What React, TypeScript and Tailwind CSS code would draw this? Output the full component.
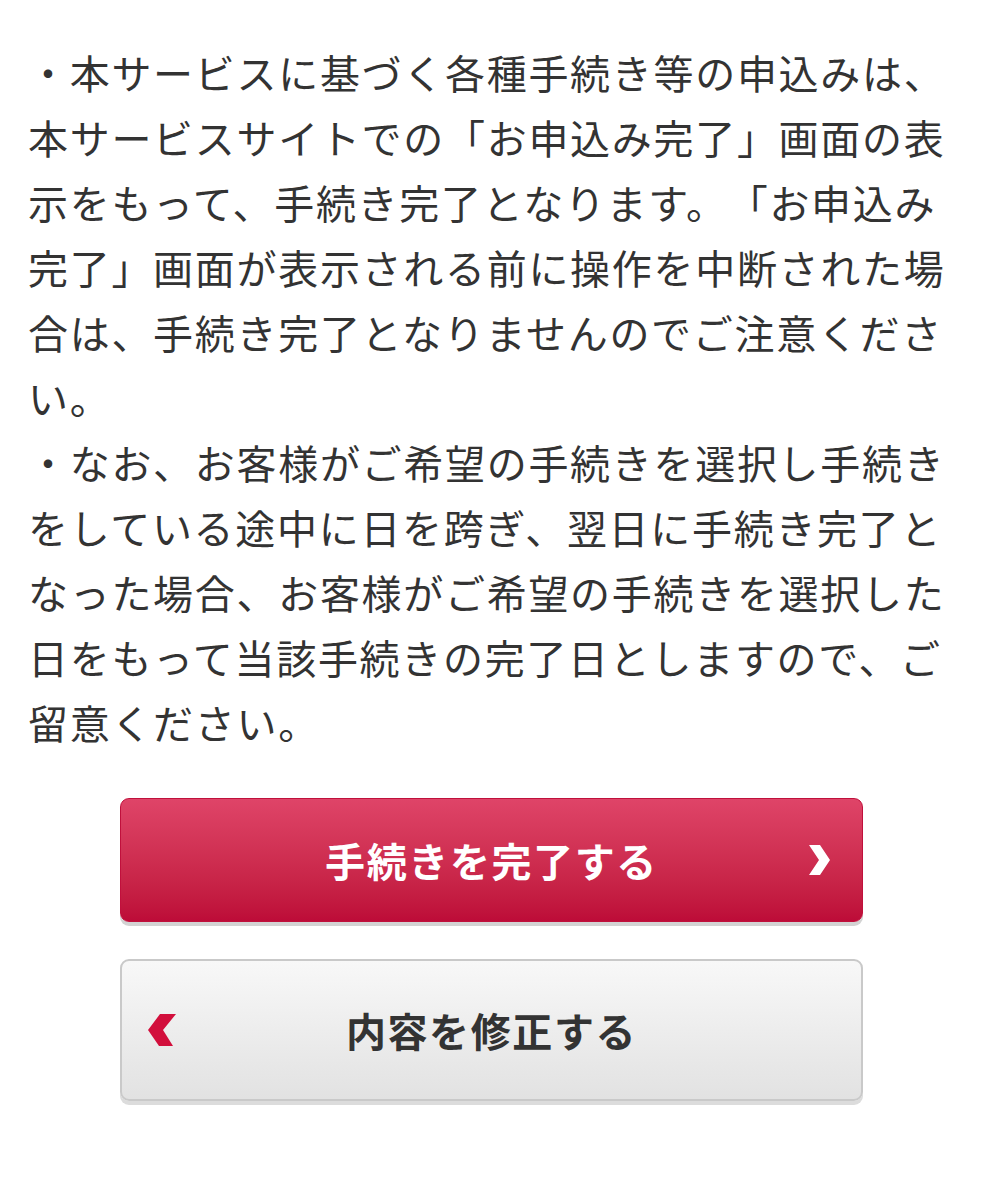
export default function App() {
  return (
    <div
      className="w-[982px] min-h-[1200px] bg-white pl-[28px] pr-[24px] pt-[40px]"
      style={{ fontFamily: '"Noto Sans CJK JP", "Noto Sans", sans-serif' }}
    >
      <div className="w-[930px] text-[40px] leading-[65px] tracking-[1.7px] text-[#333333] [text-spacing-trim:space-all]">
        <p>・本サービスに基づく各種手続き等の申込みは、本サービスサイトでの「お申込み完了」画面の表示をもって、手続き完了となります。「お申込み完了」画面が表示される前に操作を中断された場合は、手続き完了となりませんのでご注意ください。</p>
        <p>・なお、お客様がご希望の手続きを選択し手続きをしている途中に日を跨ぎ、翌日に手続き完了となった場合、お客様がご希望の手続きを選択した日をもって当該手続きの完了日としますので、ご留意ください。</p>
      </div>

      <div className="mt-[43px] ml-[92px] flex w-[743px] flex-col gap-[37px]">
        <button
          type="button"
          className="relative flex h-[124px] items-center justify-center rounded-[9px] border border-[#c0103c] bg-gradient-to-b from-[#df4468] to-[#bd0b38] text-[40px] tracking-[1.6px] font-bold text-white shadow-[0_4px_0_#d3d3d3]"
        >
          手続きを完了する
          <svg
            className="absolute right-[32px] top-1/2 -translate-y-1/2"
            width="21"
            height="30"
            viewBox="0 0 21 30"
          >
            <polygon points="0,0 11,0 21,15 11,30 0,30 10,15" fill="#ffffff" />
          </svg>
        </button>

        <button
          type="button"
          className="relative flex h-[142px] items-center justify-center rounded-[9px] border-2 border-[#c9c9c9] bg-gradient-to-b from-[#f8f8f8] to-[#e2e2e2] text-[40px] tracking-[1.6px] font-bold text-[#333333] shadow-[0_4px_0_#dcdcdc]"
        >
          内容を修正する
          <svg
            className="absolute left-[26px] top-1/2 -translate-y-1/2"
            width="29"
            height="32"
            viewBox="0 0 29 32"
          >
            <polygon points="12,0 28,0 15,16 25,32 11,32 0,16" fill="#d20f3c" />
          </svg>
        </button>
      </div>
    </div>
  );
}
